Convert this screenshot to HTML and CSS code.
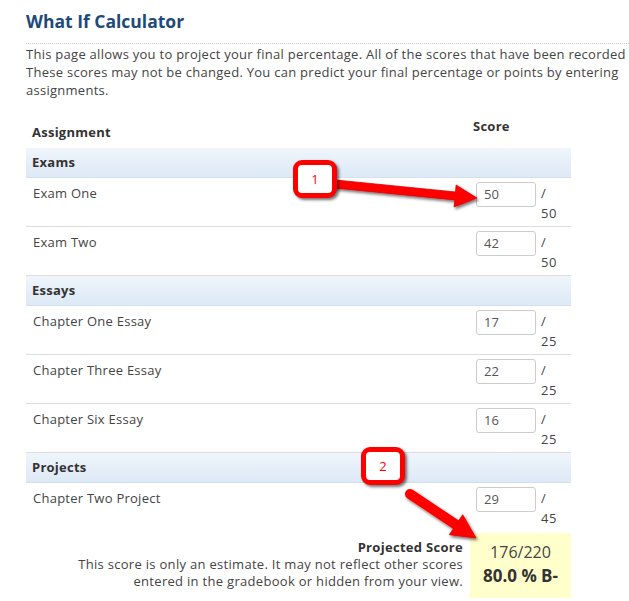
FILE: index.html
```html
<!DOCTYPE html>
<html>
<head>
<meta charset="utf-8">
<link rel="stylesheet" href="styles.css">
</head>
<body>
<div class="page">
  <h1 class="title">What If Calculator</h1>
  <div class="intro">
    <div class="intro-line">This page allows you to project your final percentage. All of the scores that have been recorded</div>
    <div class="intro-line">These scores may not be changed. You can predict your final percentage or points by entering</div>
    <div class="intro-line">assignments.</div>
  </div>

  <div class="calc">
    <div class="head-row">
      <div class="head-name">Assignment</div>
      <div class="head-score">Score</div>
    </div>

    <div class="group-row">Exams</div>
    <div class="item-row">
      <div class="item-name">Exam One</div>
      <div class="item-score"><span class="score-input">50</span><span class="score-max">/ 50</span></div>
    </div>
    <div class="item-row">
      <div class="item-name">Exam Two</div>
      <div class="item-score"><span class="score-input">42</span><span class="score-max">/ 50</span></div>
    </div>

    <div class="group-row">Essays</div>
    <div class="item-row">
      <div class="item-name">Chapter One Essay</div>
      <div class="item-score"><span class="score-input">17</span><span class="score-max">/ 25</span></div>
    </div>
    <div class="item-row">
      <div class="item-name">Chapter Three Essay</div>
      <div class="item-score"><span class="score-input">22</span><span class="score-max">/ 25</span></div>
    </div>
    <div class="item-row">
      <div class="item-name">Chapter Six Essay</div>
      <div class="item-score"><span class="score-input">16</span><span class="score-max">/ 25</span></div>
    </div>

    <div class="group-row">Projects</div>
    <div class="item-row item-last">
      <div class="item-name">Chapter Two Project</div>
      <div class="item-score"><span class="score-input">29</span><span class="score-max">/ 45</span></div>
    </div>

    <div class="projected">
      <div class="projected-text">
        <div class="projected-label">Projected Score</div>
        <div>This score is only an estimate. It may not reflect other scores</div>
        <div>entered in the gradebook or hidden from your view.</div>
      </div>
      <div class="projected-box">
        <div class="projected-points">176/220</div>
        <div class="projected-grade">80.0 % B-</div>
      </div>
    </div>
  </div>
</div>

<svg class="arrows" width="629" height="601" viewBox="0 0 629 601">
  <defs>
    <filter id="sh" x="-20%" y="-20%" width="140%" height="140%">
      <feDropShadow dx="1.5" dy="2" stdDeviation="1.5" flood-color="#000" flood-opacity="0.55"/>
    </filter>
  </defs>
  <g filter="url(#sh)" fill="#ff0000" stroke="#e00000" stroke-width="0.8">
    <polygon points="334.6,188.0 335.4,180.0 455.5,192.0 456.1,185.0 477,198 454.1,206.9 454.7,199.9"/>
    <line x1="410" y1="494" x2="458" y2="526" stroke="#ff0000" stroke-width="10" stroke-linecap="round"/>
    <polygon points="462.7,514.7 476,538 449.3,534.7"/>
  </g>
</svg>

<div class="callout callout-one">1</div>
<div class="callout callout-two">2</div>
</body>
</html>
```

FILE: styles.css
```css
html, body {
  margin: 0;
  padding: 0;
  overflow: hidden;
  background: #ffffff;
}

body {
  position: relative;
  width: 629px;
  height: 601px;
  font-family: "Open Sans", "DejaVu Sans", sans-serif;
  font-size: 13px;
  letter-spacing: 0.25px;
  color: #444444;
}

.page {
  padding: 9px 0 0 26px;
}

.title {
  margin: 0;
  font-size: 17.5px;
  font-weight: 700;
  line-height: 24px;
  letter-spacing: 0;
  color: #1d4a7a;
  padding-bottom: 10px;
  border-bottom: 1px dotted #c8c8c8;
}

.intro {
  padding-top: 1px;
  margin-bottom: 12px;
}

.intro-line {
  white-space: nowrap;
  line-height: 18px;
  letter-spacing: 0.27px;
}

.calc {
  width: 545px;
}

.head-row {
  display: grid;
  grid-template-columns: 1fr 98px;
  height: 37px;
  font-weight: 700;
  color: #333;
}

.head-name {
  align-self: end;
  padding: 0 0 7px 6px;
}

.head-score {
  padding-top: 6px;
  line-height: 18px;
}

.group-row {
  height: 29px;
  line-height: 29px;
  padding-left: 6px;
  font-weight: 700;
  color: #333;
  background: linear-gradient(#eff5fc, #dde9f6);
  border-bottom: 1px solid #d3dfec;
}

.item-row {
  display: grid;
  grid-template-columns: 1fr 95px;
  height: 48px;
  border-bottom: 1px solid #dddddd;
}

.item-last {
  border-bottom: none;
}

.item-name {
  padding: 6px 0 0 7px;
  line-height: 18px;
}

.item-score {
  display: flex;
  align-items: flex-start;
  gap: 5px;
  padding-top: 4px;
}

.score-input {
  box-sizing: border-box;
  width: 60px;
  height: 25px;
  border: 1px solid #cccccc;
  border-radius: 3px;
  padding: 2px 0 0 7px;
  line-height: 19px;
  letter-spacing: 0;
  color: #555555;
  background: #ffffff;
}

.score-max {
  width: 18px;
  line-height: 20px;
  padding-top: 1px;
  letter-spacing: 0.6px;
}

.projected {
  display: flex;
  justify-content: flex-end;
  margin-top: 2px;
}

.projected-text {
  text-align: right;
  padding: 5px 7px 0 0;
  line-height: 17px;
  letter-spacing: 0.3px;
}

.projected-label {
  font-weight: 700;
  color: #333;
  line-height: 18px;
}

.projected-box {
  width: 101px;
  height: 65px;
  background: #ffffcc;
  text-align: center;
  color: #444;
  letter-spacing: 0;
}

.projected-points {
  font-size: 16px;
  padding-top: 7px;
  line-height: 24px;
}

.projected-grade {
  font-size: 17px;
  font-weight: 700;
  line-height: 24px;
  color: #333;
}

.arrows {
  position: absolute;
  left: 0;
  top: 0;
  pointer-events: none;
}

.callout {
  position: absolute;
  box-sizing: border-box;
  width: 44px;
  height: 38px;
  border: 5px solid #ff0000;
  border-radius: 9px;
  background: #ffffff;
  color: #ff0000;
  font-size: 13px;
  letter-spacing: 0;
  line-height: 28px;
  text-align: center;
  box-shadow: 2px 2px 3px rgba(0, 0, 0, 0.55);
}

.callout-one {
  left: 293px;
  top: 160px;
}

.callout-two {
  left: 361px;
  top: 447px;
}
```
